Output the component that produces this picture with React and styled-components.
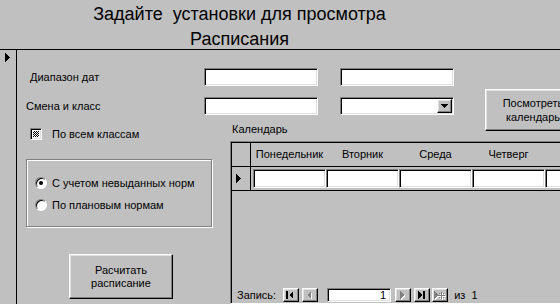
import React from "react";
import styled, { createGlobalStyle, css } from "styled-components";

const GlobalStyle = createGlobalStyle`
  html, body {
    margin: 0;
    padding: 0;
    background: #c0c0c0;
  }
  body {
    font-family: "Liberation Sans", Arial, sans-serif;
    font-size: 11px;
    color: #000;
  }
  #root {
    width: 560px;
    height: 304px;
    overflow: hidden;
  }
`;

const sunken = css`
  background: #fff;
  border: 1px solid;
  border-color: #808080 #fff #fff #808080;
  box-shadow: inset 1px 1px 0 #000, inset -1px -1px 0 #dfdfdf;
  box-sizing: border-box;
`;

const raised = css`
  background: #c0c0c0;
  border: 1px solid;
  border-color: #fff #000 #000 #fff;
  box-shadow: inset -1px -1px 0 #808080, inset 1px 1px 0 #dfdfdf;
  box-sizing: border-box;
`;

const Form = styled.div`
  width: 560px;
  height: 304px;
  display: flex;
  flex-direction: column;
  overflow: hidden;
`;

const Header = styled.div`
  height: 47px;
  border-bottom: 1px solid #000;
  padding: 2px 81px 0 0;
  box-sizing: content-box;
  text-align: center;
  font-size: 18px;
  line-height: 25px;
  white-space: pre;
`;

const Body = styled.div`
  flex: 1;
  display: flex;
  min-height: 0;
`;

const RecordSelector = styled.div`
  width: 17px;
  flex-shrink: 0;
  box-sizing: border-box;
  border-right: 1px solid #000;
  padding: 2px 0 0 5px;
`;

const Detail = styled.div`
  flex: 1;
  display: grid;
  grid-template-columns: 9px 178px 26px 88px 22px 114px 31px 96px;
  grid-template-rows: 18px 11px 18px 8px 18px 1fr;
  padding-top: 18px;
  min-height: 0;
`;

const Label = styled.div`
  grid-column: 2;
  grid-row: ${(p) => p.$row};
  display: flex;
  align-items: center;
  padding-left: ${(p) => p.$indent || 0}px;
  white-space: nowrap;
`;

const TextBox = styled.div`
  ${sunken};
  grid-column: ${(p) => p.$col};
  grid-row: ${(p) => p.$row};
  height: 18px;
`;

const ComboBox = styled(TextBox)`
  display: flex;
  justify-content: flex-end;
  align-items: center;
  padding-right: 1px;
`;

const DropButton = styled.div`
  ${raised};
  width: 15px;
  height: 14px;
  display: flex;
  align-items: center;
  justify-content: center;
`;

const ViewButton = styled.div`
  ${raised};
  grid-column: 8;
  grid-row: 1 / 6;
  align-self: start;
  margin-top: 21px;
  width: 96px;
  height: 42px;
  display: flex;
  align-items: center;
  justify-content: center;
  text-align: center;
  line-height: 14px;
`;

const CheckRow = styled.div`
  grid-column: 2 / 4;
  grid-row: 5;
  align-self: end;
  margin-bottom: 1px;
  padding-left: 4px;
  display: flex;
  align-items: center;
  gap: 10px;
`;

const CheckBox = styled.div`
  ${sunken};
  width: 12px;
  height: 12px;
  position: relative;
  &::after {
    content: "";
    position: absolute;
    inset: 2px;
    background: repeating-conic-gradient(#000 0 25%, #fff 0 50%) 0 0 / 2px 2px;
  }
`;

const CalendarLabel = styled.div`
  grid-column: 4 / 7;
  grid-row: 5;
  align-self: start;
  padding-left: 2px;
  line-height: 13px;
`;

const LeftColumn = styled.div`
  grid-column: 2 / 4;
  grid-row: 6;
  display: flex;
  flex-direction: column;
  align-items: flex-start;
`;

const OptionGroup = styled.div`
  margin-top: 18px;
  width: 186px;
  height: 68px;
  box-sizing: border-box;
  border: 1px solid #808080;
  box-shadow: inset 1px 1px 0 #fff, 1px 1px 0 #fff;
  padding: 16px 0 0 8px;
  display: flex;
  flex-direction: column;
  gap: 8px;
`;

const OptionRow = styled.div`
  height: 14px;
  display: flex;
  align-items: center;
  gap: 5px;
`;

const Radio = styled.div`
  width: 12px;
  height: 12px;
  box-sizing: border-box;
  border-radius: 50%;
  background: #fff;
  border: 1px solid;
  border-color: #808080 #fff #fff #808080;
  box-shadow: inset 1px 1px 0 #000;
  display: flex;
  align-items: center;
  justify-content: center;
  &::after {
    content: "";
    width: 4px;
    height: 4px;
    border-radius: 50%;
    background: ${(p) => (p.$checked ? "#000" : "transparent")};
  }
`;

const CalcButton = styled.div`
  ${raised};
  margin: 27px 0 0 43px;
  width: 104px;
  height: 45px;
  display: flex;
  align-items: center;
  justify-content: center;
  text-align: center;
  line-height: 13px;
`;

const Subform = styled.div`
  grid-column: 4 / -1;
  grid-row: 6;
  display: flex;
  flex-direction: column;
  border: 1px solid;
  border-color: #808080 #fff #fff #808080;
  box-shadow: inset 1px 1px 0 #000;
  padding: 1px 0 0 1px;
  box-sizing: border-box;
  min-height: 0;
  overflow: hidden;
`;

const SheetRow = styled.div`
  display: flex;
  height: ${(p) => p.$height}px;
  flex-shrink: 0;
  border-bottom: 1px solid #000;
`;

const RowSelector = styled.div`
  width: 19px;
  flex-shrink: 0;
  box-sizing: border-box;
  border-right: 1px solid #000;
  display: flex;
  align-items: center;
  padding-left: 4px;
`;

const Cells = styled.div`
  display: flex;
  padding: ${(p) => (p.$data ? "2px 0 0 2px" : "0 0 0 2px")};
`;

const HeadCell = styled.div`
  width: 73px;
  flex-shrink: 0;
  text-align: center;
  line-height: 22px;
  white-space: nowrap;
`;

const DataCell = styled.div`
  ${sunken};
  width: 73px;
  height: 19px;
  flex-shrink: 0;
`;

const Spacer = styled.div`
  flex: 1;
`;

const NavBar = styled.div`
  height: 14px;
  margin-bottom: 1px;
  padding-left: 5px;
  display: flex;
  align-items: center;
  white-space: nowrap;
`;

const NavText = styled.span`
  margin-left: ${(p) => p.$gap || 0}px;
  line-height: 14px;
  white-space: pre;
`;

const NavButton = styled.div`
  ${raised};
  width: 16px;
  height: 14px;
  margin-left: ${(p) => p.$gap || 0}px;
  display: flex;
  align-items: center;
  justify-content: center;
`;

const RecordBox = styled.div`
  ${sunken};
  width: 64px;
  height: 14px;
  margin-left: ${(p) => p.$gap || 0}px;
  text-align: right;
  padding-right: 4px;
  line-height: 12px;
`;

const Triangle = () => (
  <svg width="6" height="9" viewBox="0 0 6 9" shapeRendering="crispEdges">
    <polygon points="0,0 5,4.5 0,9" fill="#000" />
  </svg>
);

const navShapes = {
  first: (
    <>
      <rect x="1" y="0" width="2" height="8" />
      <polygon points="8,0 4,4 8,8" />
    </>
  ),
  prev: <polygon points="7,0 3,4 7,8" />,
  next: <polygon points="3,0 7,4 3,8" />,
  last: (
    <>
      <polygon points="2,0 6,4 2,8" />
      <rect x="7" y="0" width="2" height="8" />
    </>
  ),
  add: (
    <>
      <polygon points="0,0 4,4 0,8" />
      <rect x="7" y="1" width="1" height="7" />
      <rect x="4" y="4" width="7" height="1" />
      <rect x="5" y="2" width="1" height="1" />
      <rect x="9" y="2" width="1" height="1" />
      <rect x="5" y="6" width="1" height="1" />
      <rect x="9" y="6" width="1" height="1" />
    </>
  ),
};

const NavIcon = ({ kind, disabled }) => (
  <svg width="12" height="9" viewBox="0 0 12 9" shapeRendering="crispEdges">
    {disabled && (
      <g fill="#fff" transform="translate(1,1)">
        {navShapes[kind]}
      </g>
    )}
    <g fill={disabled ? "#808080" : "#000"}>{navShapes[kind]}</g>
  </svg>
);

const days = ["Понедельник", "Вторник", "Среда", "Четверг", ""];

export default function App() {
  return (
    <>
      <GlobalStyle />
      <Form>
        <Header>{"Задайте  установки для просмотра\nРасписания"}</Header>
        <Body>
          <RecordSelector>
            <Triangle />
          </RecordSelector>
          <Detail>
            <Label $row={1} $indent={4}>
              Диапазон дат
            </Label>
            <TextBox $col="3 / 5" $row={1} />
            <TextBox $col="6" $row={1} />

            <Label $row={3}>Смена и класс</Label>
            <TextBox $col="3 / 5" $row={3} />
            <ComboBox $col="6" $row={3}>
              <DropButton>
                <svg width="7" height="4" viewBox="0 0 7 4" shapeRendering="crispEdges">
                  <polygon points="0,0 7,0 3.5,4" fill="#000" />
                </svg>
              </DropButton>
            </ComboBox>

            <ViewButton>
              Посмотреть
              <br />
              календарь
            </ViewButton>

            <CheckRow>
              <CheckBox />
              <span>По всем классам</span>
            </CheckRow>

            <CalendarLabel>Календарь</CalendarLabel>

            <LeftColumn>
              <OptionGroup>
                <OptionRow>
                  <Radio $checked />
                  <span>С учетом невыданных норм</span>
                </OptionRow>
                <OptionRow>
                  <Radio />
                  <span>По плановым нормам</span>
                </OptionRow>
              </OptionGroup>
              <CalcButton>
                Расчитать
                <br />
                расписание
              </CalcButton>
            </LeftColumn>

            <Subform>
              <SheetRow $height={23}>
                <RowSelector />
                <Cells>
                  {days.map((d, i) => (
                    <HeadCell key={i}>{d}</HeadCell>
                  ))}
                </Cells>
              </SheetRow>
              <SheetRow $height={23}>
                <RowSelector>
                  <Triangle />
                </RowSelector>
                <Cells $data>
                  {days.map((d, i) => (
                    <DataCell key={i} />
                  ))}
                </Cells>
              </SheetRow>
              <Spacer />
              <NavBar>
                <NavText>Запись:</NavText>
                <NavButton $gap={7}>
                  <NavIcon kind="first" />
                </NavButton>
                <NavButton $gap={3}>
                  <NavIcon kind="prev" disabled />
                </NavButton>
                <RecordBox $gap={9}>1</RecordBox>
                <NavButton $gap={4}>
                  <NavIcon kind="next" disabled />
                </NavButton>
                <NavButton $gap={3}>
                  <NavIcon kind="last" />
                </NavButton>
                <NavButton $gap={2}>
                  <NavIcon kind="add" disabled />
                </NavButton>
                <NavText $gap={6}>из  1</NavText>
              </NavBar>
            </Subform>
          </Detail>
        </Body>
      </Form>
    </>
  );
}
